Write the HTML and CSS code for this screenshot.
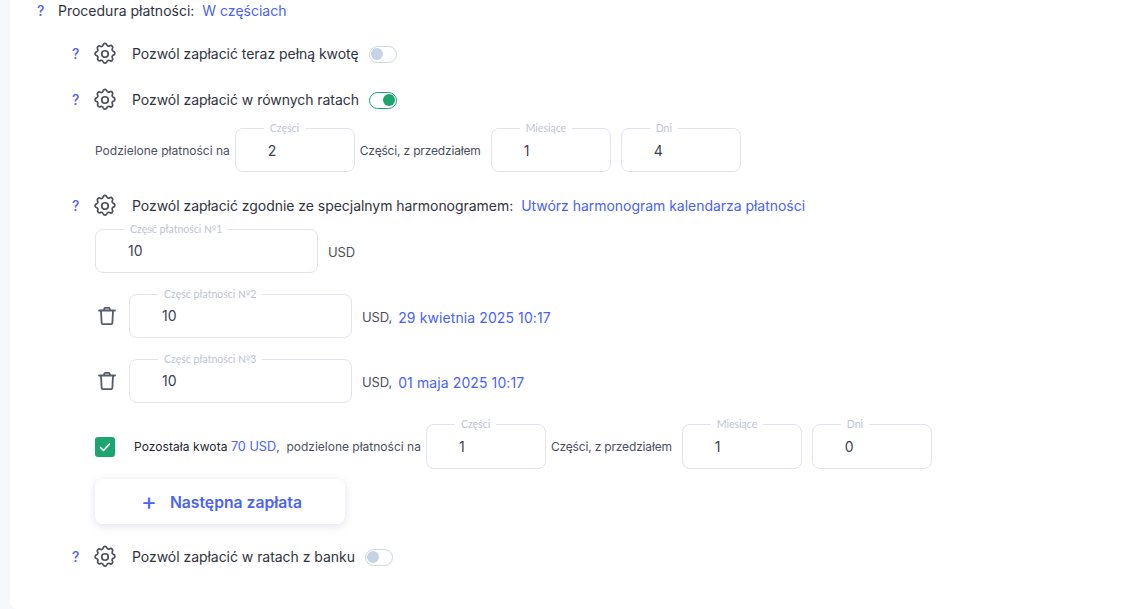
FILE: index.html
```html
<!DOCTYPE html>
<html lang="pl">
<head>
<meta charset="utf-8">
<title>Procedura płatności</title>
<link rel="stylesheet" href="styles.css">
</head>
<body>
<svg class="defs" width="0" height="0" aria-hidden="true">
  <symbol id="gear" viewBox="0 0 24 24">
    <path fill="none" stroke="currentColor" stroke-width="1.6" stroke-linecap="round" stroke-linejoin="round" d="M10.3 3.4a1.8 1.8 0 0 1 3.4 0 1.8 1.8 0 0 0 2.6 1.1 1.8 1.8 0 0 1 2.5 2.5 1.8 1.8 0 0 0 1.1 2.6 1.8 1.8 0 0 1 0 3.4 1.8 1.8 0 0 0-1.1 2.6 1.8 1.8 0 0 1-2.5 2.5 1.8 1.8 0 0 0-2.6 1.1 1.8 1.8 0 0 1-3.4 0 1.8 1.8 0 0 0-2.6-1.1A1.8 1.8 0 0 1 5.2 16a1.8 1.8 0 0 0-1.1-2.6 1.8 1.8 0 0 1 0-3.4A1.8 1.8 0 0 0 5.2 7.4a1.8 1.8 0 0 1 2.5-2.5 1.8 1.8 0 0 0 2.6-1.5z"/>
    <circle cx="12" cy="12" r="3" fill="none" stroke="currentColor" stroke-width="1.6"/>
  </symbol>
  <symbol id="trash" viewBox="0 0 20 20">
    <path fill="none" stroke="currentColor" stroke-width="1.8" stroke-linecap="round" stroke-linejoin="round" d="M2 4.5h16M4 4.5l.6 12a1.8 1.8 0 0 0 1.8 1.7h7.2a1.8 1.8 0 0 0 1.8-1.7l.6-12M7 4.5l.4-2a1 1 0 0 1 1-.7h3.2a1 1 0 0 1 1 .7l.4 2"/>
  </symbol>
</svg>
<main class="card">
  <div class="row row-top">
    <span class="help">?</span>
    <span class="label">Procedura płatności:</span>
    <a class="link">W częściach</a>
  </div>

  <div class="row row-opt row-a">
    <span class="help">?</span>
    <svg class="gear"><use href="#gear"/></svg>
    <span class="label">Pozwól zapłacić teraz pełną kwotę</span>
    <span class="toggle"></span>
  </div>

  <div class="row row-opt row-b">
    <span class="help">?</span>
    <svg class="gear"><use href="#gear"/></svg>
    <span class="label">Pozwól zapłacić w równych ratach</span>
    <span class="toggle on"></span>
  </div>

  <div class="split split-a">
    <span class="small lead">Podzielone płatności na</span>
    <div class="field f-120"><span class="legend">Części</span><span class="value">2</span></div>
    <span class="small gap">Części, z przedziałem</span>
    <div class="field f-120"><span class="legend">Miesiące</span><span class="value">1</span></div>
    <div class="field f-120 next-field"><span class="legend">Dni</span><span class="value">4</span></div>
  </div>

  <div class="row row-opt row-c">
    <span class="help">?</span>
    <svg class="gear"><use href="#gear"/></svg>
    <span class="label">Pozwól zapłacić zgodnie ze specjalnym harmonogramem:</span>
    <a class="link">Utwórz harmonogram kalendarza płatności</a>
  </div>

  <div class="pay pay-1">
    <div class="field f-223"><span class="legend">Część płatności №1</span><span class="value">10</span></div>
    <span class="unit">USD</span>
  </div>

  <div class="pay pay-n">
    <svg class="trash"><use href="#trash"/></svg>
    <div class="field f-223"><span class="legend">Część płatności №2</span><span class="value">10</span></div>
    <span class="unit">USD,</span>
    <a class="link date">29 kwietnia 2025 10:17</a>
  </div>

  <div class="pay pay-n">
    <svg class="trash"><use href="#trash"/></svg>
    <div class="field f-223"><span class="legend">Część płatności №3</span><span class="value">10</span></div>
    <span class="unit">USD,</span>
    <a class="link date">01 maja 2025 10:17</a>
  </div>

  <div class="split split-b">
    <span class="check"><svg viewBox="0 0 20 20" width="20" height="20"><path d="M5.5 10.5l3 3 6-6.5" fill="none" stroke="#fff" stroke-width="1.7" stroke-linecap="round" stroke-linejoin="round"/></svg></span>
    <span class="remain"><span class="dark">Pozostała kwota</span> <a class="link">70 USD</a>,&nbsp; podzielone płatności na</span>
    <div class="field f-120"><span class="legend">Części</span><span class="value">1</span></div>
    <span class="small gap">Części, z przedziałem</span>
    <div class="field f-120"><span class="legend">Miesiące</span><span class="value">1</span></div>
    <div class="field f-120 next-field"><span class="legend">Dni</span><span class="value">0</span></div>
  </div>

  <button class="next" type="button"><span class="plus">+</span><span>Następna zapłata</span></button>

  <div class="row row-opt row-d">
    <span class="help">?</span>
    <svg class="gear"><use href="#gear"/></svg>
    <span class="label">Pozwól zapłacić w ratach z banku</span>
    <span class="toggle"></span>
  </div>
</main>
</body>
</html>
```
FILE: styles.css
```css
* { box-sizing: border-box; }
html, body { margin: 0; height: 100%; overflow: hidden; }
body {
  background: #f7f8fb;
  font-family: Inter, "Liberation Sans", sans-serif;
  color: #2f3440;
}
.defs { position: absolute; }
.card {
  margin-left: 10px;
  height: 609px;
  background: #fff;
  border-bottom-left-radius: 8px;
  padding-left: 27px;
}
.row { display: flex; align-items: center; font-size: 14px; line-height: 22px; white-space: nowrap; }
.row-top { height: 22px; }
.row-top .help { width: 21px; }
.row-top .label { margin-right: 8px; }
.row-opt { padding-left: 35px; height: 26px; }
.row-opt .label { letter-spacing: -0.04px; }
.row-a { margin-top: 19px; }
.row-b { margin-top: 20px; }
.row-c { margin-top: 21px; }
.row-c .link { letter-spacing: -0.03px; }
.row-d { margin-top: 20px; }
.help { color: #4f5ef0; font-size: 14px; font-weight: 500; width: 21px; flex: none; }
.gear { width: 26px; height: 26px; color: #4a4f5a; flex: none; margin: 0 14px 1px -1px; }
.label { color: #2f3440; }
.link { color: #4a63f5; }
.row-c .label { margin-right: 8px; }
.toggle {
  width: 28px; height: 17px; margin-left: 10px;
  border: 1.5px solid #ccd8e6; border-radius: 9px;
  position: relative; flex: none;
}
.toggle::after {
  content: ""; position: absolute; left: 1px; top: 1px;
  width: 12px; height: 12px; border-radius: 50%; background: #c6d3e5;
}
.toggle.on { border-color: #1ba56f; }
.toggle.on::after { left: auto; right: 1px; background: #1ba56f; }
.split { display: flex; align-items: center; margin-left: 58px; white-space: nowrap; }
.split-a { margin-top: 15px; height: 44px; }
.split-b { margin-top: 21px; height: 45px; }
.split-b .field { height: 45px; }
.small { font-size: 12px; color: #4b5060; }
.lead { margin-right: 5px; }
.gap { margin: 0 10px 0 5px; letter-spacing: -0.17px; }
.next-field { margin-left: 10px; }
.field {
  position: relative; height: 44px; flex: none;
  border: 1px solid #e2e3f1; border-radius: 8px;
  display: flex; align-items: center;
  font-size: 14px; color: #3c4150;
}
.f-120 { width: 120px; }
.f-223 { width: 223px; }
.field .value { padding-left: 32px; }
.f-223 .value { padding-bottom: 1px; }
.legend {
  position: absolute; top: -7px; left: 28px;
  background: #fff; padding: 0 6px;
  font-family: Lato, Inter, sans-serif;
  font-size: 10.5px; line-height: 13px; color: #c0c4d6;
}
.pay { display: flex; align-items: center; margin-left: 58px; white-space: nowrap; font-size: 13px; }
.pay-1 { margin-top: 10px; height: 44px; }
.pay-n { margin-top: 21px; height: 44px; }
.unit { margin: 2px 6px 0 10px; font-size: 13px; letter-spacing: -0.1px; color: #4b5060; }
.date { font-size: 14px; letter-spacing: .1px; margin-top: 3px; }
.trash { width: 20px; height: 20px; color: #565c6a; flex: none; margin: 0 12px 0 2px; }
.check {
  width: 20px; height: 20px; border-radius: 3px; background: #1ba56f; flex: none;
  display: flex; margin-right: 19px;
}
.remain { font-size: 12px; color: #4b5060; margin-right: 5px; }
.remain .dark { color: #23262f; letter-spacing: .07px; }
.remain .link { font-size: 12.7px; }
.next {
  display: flex; align-items: center; justify-content: center; gap: 13px;
  margin: 10px 0 0 58px; width: 250px; height: 45px; padding: 1px 0 0 3px;
  border: 0; border-radius: 8px; background: #fff;
  box-shadow: 0 2px 8px rgba(70, 80, 150, .16);
  font: 600 15.7px Inter, "Liberation Sans", sans-serif; color: #4a63f5;
}
.plus { font-size: 24px; font-weight: 400; line-height: 20px; }
```
